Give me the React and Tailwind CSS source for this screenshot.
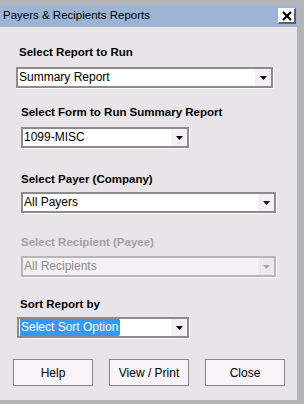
import React from 'react';

const sans = { fontFamily: '"Liberation Sans", Arial, sans-serif' };

function Arrow({ disabled }) {
    return (
        <svg width="7" height="4" viewBox="0 0 7 4">
            <polygon points="0,0 7,0 3.5,4" fill={disabled ? '#a8a4a8' : '#000'} />
        </svg>
    );
}

function Combo({ className, value, disabled, focused }) {
    return (
        <div className={`border-r border-b border-white ${className}`}>
            <div className={`flex h-[21px] border-2 ${disabled ? 'border-[#b8b4b8] bg-[#f4f0f4]' : 'border-[#8c8c8c] bg-white'}`}>
                <div className="flex-1 flex items-center pl-[1px] overflow-hidden">
                    {focused ? (
                        <span className="flex items-center">
                            <span className="bg-[#3399ff] text-white text-[12px] leading-[17px] px-[1px]">{value}</span>
                            <span className="w-[1px] h-[15px] bg-[#e07010]" />
                        </span>
                    ) : (
                        <span className={`text-[12px] leading-[17px] ${disabled ? 'text-[#8c8c8c]' : 'text-black'}`}>{value}</span>
                    )}
                </div>
                <div className={`w-[17px] flex items-center justify-center border-l border-white ${disabled ? 'bg-[#ece8ec]' : 'bg-[#f4f0f4]'}`}>
                    <Arrow disabled={disabled} />
                </div>
            </div>
        </div>
    );
}

function Label({ className, children, disabled }) {
    return (
        <div className={`text-[11.5px] leading-[13px] font-bold ${disabled ? 'text-[#a4a0a4]' : 'text-black'} ${className}`}>
            {children}
        </div>
    );
}

export default function App() {
    return (
        <div className="w-[304px] h-[404px] bg-[#b4b4b4] pt-[5px] pr-[7px] pb-[4px] overflow-hidden" style={sans}>
            <div className="h-full flex flex-col bg-[#e8e4e8]">
                {/* title bar */}
                <div className="h-[22px] bg-[#9cb5d5] flex items-center justify-between pl-[3px] pr-[1px]">
                    <span className="text-[11.5px] text-black">Payers &amp; Recipients Reports</span>
                    <div className="w-[18px] h-[16px] bg-white border-t border-l border-white border-r-2 border-b-2 border-r-[#606060] border-b-[#606060] flex items-center justify-center">
                        <svg width="10" height="10" viewBox="0 0 10 10">
                            <path d="M1 1 L9 9 M9 1 L1 9" stroke="#000" strokeWidth="2.2" />
                        </svg>
                    </div>
                </div>

                <div className="flex-1 flex flex-col items-start">
                    <Label className="mt-[19px] ml-[19px]">Select Report to Run</Label>
                    <Combo className="mt-[8px] ml-[16px] w-[258px]" value="Summary Report" />

                    <Label className="mt-[17px] ml-[21px]">Select Form to Run Summary Report</Label>
                    <Combo className="mt-[8px] ml-[21px] w-[169px]" value="1099-MISC" />

                    <Label className="mt-[24px] ml-[21px]">Select Payer (Company)</Label>
                    <Combo className="mt-[6px] ml-[21px] w-[256px]" value="All Payers" />

                    <Label disabled className="mt-[22px] ml-[21px]">Select Recipient (Payee)</Label>
                    <Combo disabled className="mt-[7px] ml-[21px] w-[256px]" value="All Recipients" />

                    <Label className="mt-[20px] ml-[20px]">Sort Report by</Label>
                    <Combo focused className="mt-[6px] ml-[17px] w-[173px]" value="Select Sort Option" />

                    <div className="mt-[20px] ml-[13px] flex gap-[16px]">
                        {['Help', 'View / Print', 'Close'].map((b) => (
                            <button key={b} className="w-[80px] h-[27px] bg-[#f8f4f8] border border-[#8a868a] text-[12px] text-black">
                                {b}
                            </button>
                        ))}
                    </div>
                </div>
            </div>
        </div>
    );
}
